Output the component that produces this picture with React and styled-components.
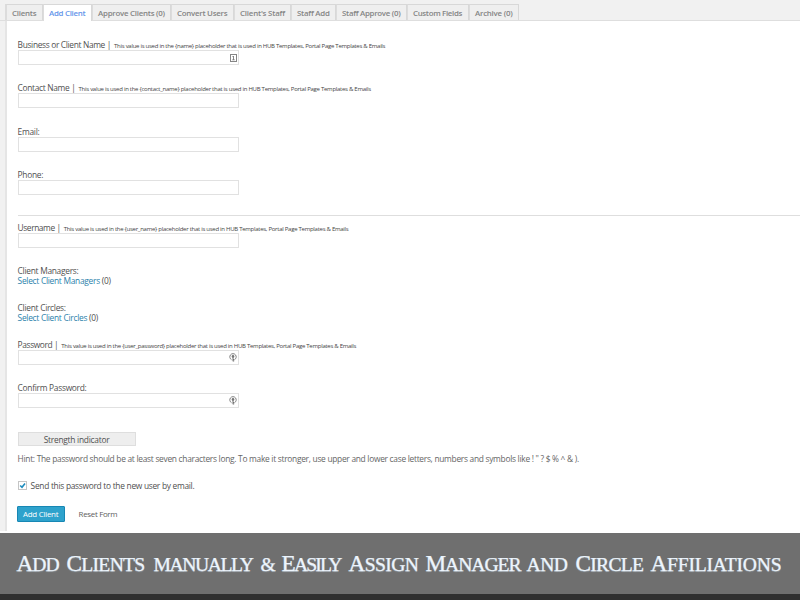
import React from 'react';
import styled, { createGlobalStyle } from 'styled-components';

const GlobalStyle = createGlobalStyle`
  * { box-sizing: border-box; }
  body {
    margin: 0;
    background: #f1f1f1;
    font-family: "Open Sans", sans-serif;
    color: #505050;
    overflow: hidden;
  }
`;

const Page = styled.div`
  width: 800px;
  height: 600px;
  display: flex;
  flex-direction: column;
  overflow: hidden;
`;

const Tabs = styled.nav`
  display: flex;
  height: 21px;
  padding: 4px 0 0 5px;
  border-bottom: 1px solid #dedede;
  flex: none;
`;

const Tab = styled.a`
  width: ${(p) => p.$width}px;
  height: ${(p) => (p.$active ? 17 : 16)}px;
  padding-left: 5px;
  border: 1px solid #d8d8d8;
  border-left-width: ${(p) => (p.$first ? 2 : 1)}px;
  border-left-color: #dcdcdc;
  border-bottom: 0;
  background: ${(p) => (p.$active ? '#fff' : '#efefef')};
  color: ${(p) => (p.$active ? '#6595ea' : '#858585')};
  font-size: 7.9px;
  font-weight: 600;
  line-height: 16px;
  letter-spacing: ${(p) => p.$track}px;
  white-space: nowrap;
`;

const Panel = styled.main`
  flex: 1;
  margin-left: 5px;
  padding: 17px 0 0 10.6px;
  border-left: 2px solid #e5e5e5;
  background: #fff;
`;

const Field = styled.section`
  height: ${(p) => p.$height}px;
`;

const Label = styled.div`
  height: 12px;
  display: flex;
  align-items: baseline;
  font-size: 8.4px;
  line-height: 13px;
  letter-spacing: ${(p) => p.$track ?? -0.28}px;
  white-space: pre;
`;

const Note = styled.small`
  margin-left: 3px;
  font-size: 6px;
  letter-spacing: -0.27px;
  color: #444;
`;

const InputBox = styled.div`
  width: 221px;
  height: 15px;
  padding-right: 1px;
  display: flex;
  align-items: center;
  justify-content: flex-end;
  border: 1px solid #e1e1e1;
  background: #fff;
`;

const Divider = styled.hr`
  margin: 0 0 4.6px;
  height: 1px;
  border: 0;
  background: #dedede;
`;

const Choice = styled.div`
  height: 10px;
  font-size: 8.4px;
  line-height: 11px;
  letter-spacing: -0.28px;
`;

const Link = styled.a`
  color: #2b7fab;
`;

const Strength = styled.div`
  width: 118px;
  height: 14px;
  border: 1px solid #dedede;
  background: #eee;
  font-size: 8.4px;
  line-height: 14px;
  letter-spacing: -0.25px;
  text-align: center;
`;

const Hint = styled.p`
  margin: 6px 0 0;
  height: 12px;
  font-size: 8.4px;
  line-height: 14px;
  letter-spacing: -0.284px;
  color: #666;
  white-space: nowrap;
`;

const CheckRow = styled.label`
  display: flex;
  align-items: center;
  gap: 4px;
  height: 12px;
  margin-top: 16px;
  font-size: 8.4px;
  line-height: 11px;
  letter-spacing: -0.285px;
`;

const CheckBox = styled.span`
  display: flex;
  width: 9px;
  height: 9px;
  border: 1px solid #c5c5c5;
  background: #fff;
`;

const Actions = styled.div`
  display: flex;
  align-items: center;
  gap: 14px;
  margin: 14px 0 0 -1px;
  font-size: 7.9px;
`;

const PrimaryButton = styled.button`
  width: 48px;
  height: 16px;
  padding: 0;
  border: 1px solid #1787b4;
  border-radius: 1px;
  background: #2ea2cc;
  color: #fff;
  font: 7.9px/14px "Open Sans", sans-serif;
  letter-spacing: -0.23px;
`;

const Reset = styled.a`
  letter-spacing: -0.3px;
  color: #606060;
`;

const Banner = styled.footer`
  flex: none;
  height: 69px;
  padding: 9px 0 0 16.5px;
  border-top: 2px solid #fff;
  border-bottom: 6px solid #303030;
  background: #6f6f6f;
  display: grid;
  grid-template-columns: 50px 87px 107px 21px 67px 77px 101px 49px 75px 131px;
  align-items: baseline;
`;

const Word = styled.span`
  display: block;
  color: #edf5fd;
  font-family: "Liberation Serif", serif;
  font-size: 19.6px;
  line-height: 43px;
  height: 43px;
  letter-spacing: ${(p) => p.$track}px;
  text-transform: uppercase;
  text-shadow: 0 1px 1px #8f98a0;
  -webkit-text-stroke: 0.25px #edf5fd;
  white-space: nowrap;
  &::first-letter {
    font-size: ${(p) => (p.$small ? 19.6 : 23.2)}px;
  }
`;

const TABS = [
  ['Clients', 38, -0.22],
  ['Add Client', 49, -0.28],
  ['Approve Clients (0)', 79, -0.25],
  ['Convert Users', 63, -0.26],
  ["Client's Staff", 57, -0.2],
  ['Staff Add', 45, -0.24],
  ['Staff Approve (0)', 71, -0.29],
  ['Custom Fields', 62, -0.33],
  ['Archive (0)', 50, -0.24],
];

const WORDS = [
  ['Add', -1],
  ['Clients', -0.7],
  ['manually', -1.4, true],
  ['&', 0, true],
  ['Easily', -1.8],
  ['Assign', -0.6],
  ['Manager', -1.05],
  ['and', -0.5, true],
  ['Circle', -0.7],
  ['Affiliations', -0.2],
];

const noteFor = (name) =>
  `This value is used in the {${name}} placeholder that is used in HUB Templates, Portal Page Templates & Emails`;

const CardIcon = () => (
  <svg width="7" height="8" viewBox="0 0 7 8" fill="none">
    <rect x=".5" y=".5" width="6" height="7" stroke="#858585" />
    <path d="M3.5 2v4M2.5 2.5h1M2.3 5.8h2.4" stroke="#777" strokeWidth=".9" />
  </svg>
);

const KeyIcon = () => (
  <svg width="8" height="9" viewBox="0 0 8 9" fill="none">
    <path d="M2.5 6.7A3.2 3.2 0 1 1 5.5 6.7" stroke="#808080" />
    <circle cx="4" cy="3.4" r="1.3" fill="#757575" />
    <path d="M4 4v4.3M4 6.5h1.2M4 7.9h1.2" stroke="#707070" />
  </svg>
);

function TextField({ label, note, icon, height = 43.4, track }) {
  return (
    <Field $height={height}>
      <Label $track={track}>
        {label}
        {note && <Note>{noteFor(note)}</Note>}
      </Label>
      <InputBox>{icon}</InputBox>
    </Field>
  );
}

export default function App() {
  return (
    <>
      <GlobalStyle />
      <Page>
        <Tabs>
          {TABS.map(([name, width, track], i) => (
            <Tab key={name} $width={width} $track={track} $first={i === 0} $active={i === 1}>
              {name}
            </Tab>
          ))}
        </Tabs>
        <Panel>
          <TextField label="Business or Client Name |" note="name" icon={<CardIcon />} track={-0.34} />
          <TextField label="Contact Name |" note="contact_name" track={-0.32} />
          <TextField label="Email:" />
          <TextField label="Phone:" height={47} />
          <Divider />
          <TextField label="Username |" note="user_name" height={44.3} track={-0.42} />
          <Field $height={37}>
            <Choice>Client Managers:</Choice>
            <Choice><Link>Select Client Managers</Link> (0)</Choice>
          </Field>
          <Field $height={35.5}>
            <Choice>Client Circles:</Choice>
            <Choice><Link>Select Client Circles</Link> (0)</Choice>
          </Field>
          <TextField label="Password |" note="user_password" icon={<KeyIcon />} track={-0.38} />
          <TextField label="Confirm Password:" icon={<KeyIcon />} height={51} />
          <Strength>Strength indicator</Strength>
          <Hint>
            {'Hint: The password should be at least seven characters long. To make it stronger, use upper and lower case letters, numbers and symbols like ! " ? $ % ^ & ).'}
          </Hint>
          <CheckRow>
            <CheckBox>
              <svg width="7" height="7" viewBox="0 0 7 7" fill="none">
                <path d="M1.2 3.5 3 5.3 6 1.5" stroke="#1e8cbe" strokeWidth="1.6" />
              </svg>
            </CheckBox>
            Send this password to the new user by email.
          </CheckRow>
          <Actions>
            <PrimaryButton>Add Client</PrimaryButton>
            <Reset>Reset Form</Reset>
          </Actions>
        </Panel>
        <Banner>
          {WORDS.map(([word, track, small]) => (
            <Word key={word} $track={track} $small={small}>{word}</Word>
          ))}
        </Banner>
      </Page>
    </>
  );
}
